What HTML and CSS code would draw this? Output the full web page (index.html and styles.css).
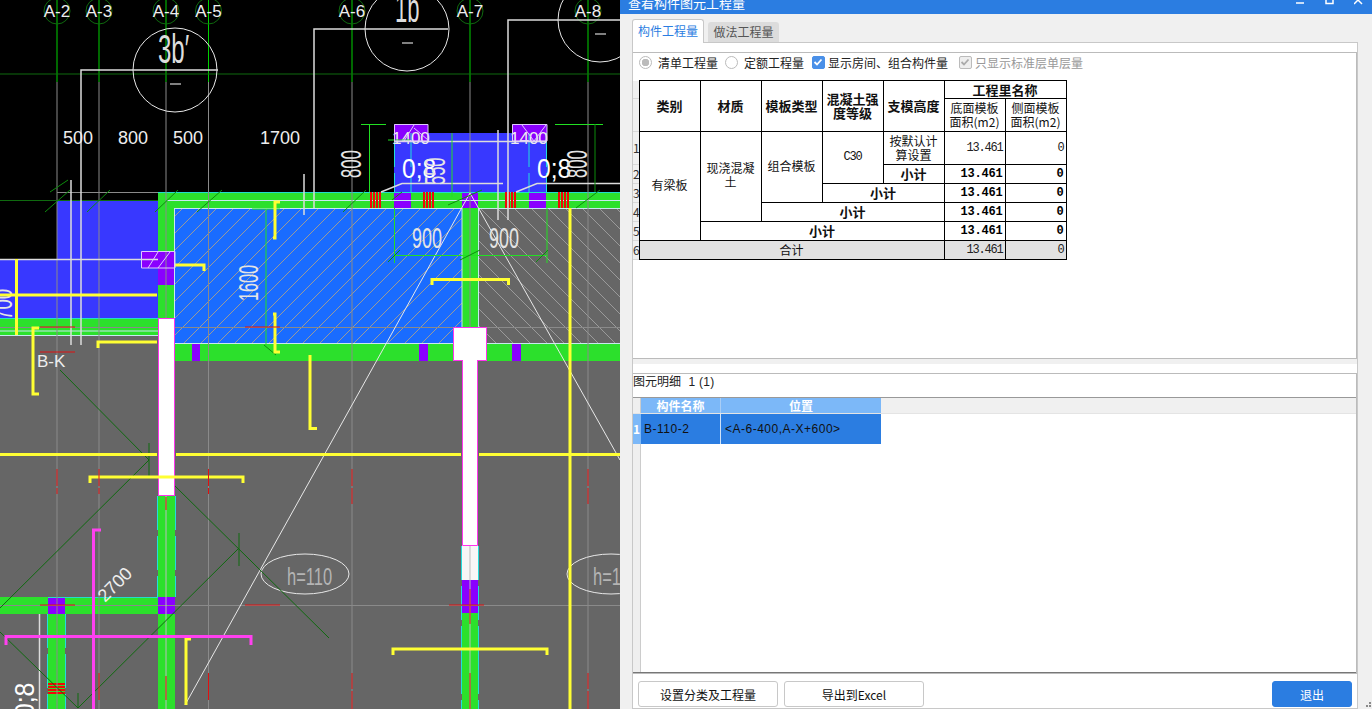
FILE: index.html
```html
<!DOCTYPE html>
<html lang="zh">
<head>
<meta charset="utf-8">
<title>查看构件图元工程量</title>
<link rel="stylesheet" href="styles.css">
</head>
<body>
<div class="app">
<svg class="cad" width="620" height="709" viewBox="0 0 620 709">
  <defs>
    <pattern id="hatchBlue" width="17" height="17" patternUnits="userSpaceOnUse">
      <path class="hatch" d="M-2 19L19 -2M-2 2L2 -2M15 19L19 15"/>
    </pattern>
    <pattern id="hatchGrey" width="17" height="17" patternUnits="userSpaceOnUse">
      <path class="hatch" d="M-2 -2L19 19M-2 15L2 19M15 -2L19 2"/>
    </pattern>
  </defs>
  <!-- ground -->
  <rect class="f-black" width="620" height="709"/>
  <rect class="f-grey" y="335" width="620" height="374"/>
  <rect class="f-blue" x="57" y="200" width="101" height="118"/>
  <rect class="f-blue" y="259" width="158" height="59"/>
  <rect class="f-blue" x="394" y="133" width="153" height="60"/>
  <rect class="f-sky" x="175" y="209" width="287" height="134"/>
  <rect fill="url(#hatchBlue)" x="175" y="209" width="287" height="134"/>
  <rect class="f-grey" x="478" y="209" width="142" height="134"/>
  <rect fill="url(#hatchGrey)" x="478" y="209" width="142" height="134"/>

  <!-- walls -->
  <rect class="f-green" x="158" y="192" width="462" height="16"/>
  <rect class="f-green" x="158" y="208" width="17" height="110"/>
  <rect class="f-green" y="318" width="158" height="17"/>
  <rect class="f-green" x="175" y="343" width="445" height="18"/>
  <rect class="f-green" x="462" y="208" width="16" height="119"/>
  <rect class="f-green" x="158" y="496" width="17" height="213"/>
  <rect class="f-green" y="597" width="158" height="17"/>
  <rect class="f-green" x="48" y="614" width="17" height="95"/>
  <rect class="f-green" x="462" y="613" width="16" height="96"/>
  <rect class="f-pale" x="462" y="546" width="16" height="34"/>

  <!-- purple blocks -->
  <rect class="f-purple" x="141" y="251" width="34" height="17"/>
  <rect class="f-purple" x="158" y="268" width="17" height="17"/>
  <rect class="f-purple" x="394" y="124" width="34" height="17"/>
  <rect class="f-purple" x="512" y="124" width="35" height="17"/>
  <rect class="f-purple" x="394" y="193" width="17" height="15"/>
  <rect class="f-purple" x="529" y="193" width="17" height="15"/>
  <rect class="f-purple" x="462" y="193" width="16" height="15"/>
  <rect class="f-purple" x="192" y="343" width="8" height="18"/>
  <rect class="f-purple" x="419" y="343" width="9" height="18"/>
  <rect class="f-purple" x="512" y="343" width="9" height="18"/>
  <rect class="f-purple" x="48" y="597" width="17" height="17"/>
  <rect class="f-purple" x="158" y="597" width="17" height="17"/>
  <rect class="f-purple" x="462" y="580" width="16" height="33"/>

  <!-- edges -->
  <path class="s-cyan" d="M158 192.500H620M0 318.500H158M158 597.500H48"/>
  <path class="s-edge" d="M175 208.500H462M478 208.500H620M175 343.500H453M487 343.500H620M174.500 208V318M462 208V327M478.500 208V327M167 200.500H620M0 335.500H158M0 331H158"/>
  <path class="s-cyan-dash" d="M157.500 496V597M175.500 496V597M47.500 614V709M65.500 614V709M461.500 546V660M478.500 546V660M461.500 660V709M478.500 660V709M394.500 133V192M546.500 133V192M411 133V192M529 133V192"/>

  <!-- red rebars -->
  <path class="s-red-bar" d="M371 192V208M374 192V208M377 192V208M380 192V208M424 192V208M427 192V208M430 192V208M433 192V208M506 192V208M509 192V208M512 192V208M515 192V208M559 192V208M562 192V208M565 192V208M568 192V208M48 684H65M48 687H65M48 690H65M48 693H65"/>

  <!-- thin grey grid -->
  <path class="s-grid" d="M57 82V709M99 82V709M166 82V318M208.500 82V709M352 82V709M470 82V327M588 82V709M0 327.500H620M0 605.500H620M57 192.500H158"/>
  <path class="s-gridlight" d="M166 496V709M470 546V709"/>

  <!-- white columns -->
  <rect class="s-magenta f-white" x="158.500" y="318.500" width="16" height="177"/>
  <rect class="f-white" x="462" y="361" width="16" height="185"/>
  <path class="s-magenta" d="M462.500 361V545.500H477.500V361"/>
  <rect class="s-magenta f-white" x="453.500" y="327.500" width="33" height="33"/>
  <rect class="f-white" x="463" y="359" width="14" height="4"/>

  <!-- axis -->
  <path class="s-axis" d="M57 0V82M99 0V82M166 0V82M208.500 0V82M352 0V82M470 0V82M588 0V82"/>
  <path class="s-dgreen" d="M0 74H620M0 200.500H158"/>
  <g class="s-dgreen">
    <circle cx="57" cy="11" r="13"/><circle cx="99" cy="11" r="13"/><circle cx="166" cy="11" r="13"/><circle cx="208.500" cy="11" r="13"/>
    <circle cx="352" cy="11" r="13"/><circle cx="470" cy="11" r="13"/><circle cx="588" cy="11" r="13"/>
  </g>
  <g class="axis-label">
    <text x="57" y="17">A-2</text><text x="99" y="17">A-3</text><text x="166" y="17">A-4</text><text x="208.500" y="17">A-5</text>
    <text x="352" y="17">A-6</text><text x="470" y="17">A-7</text><text x="588" y="17">A-8</text>
  </g>

  <!-- leaders & section circles -->
  <g class="s-white-thin">
    <circle cx="175" cy="70" r="42"/>
    <circle cx="407" cy="29" r="42"/>
    <circle cx="600" cy="20" r="42"/>
    <ellipse cx="305" cy="574" rx="44" ry="20"/>
    <ellipse cx="611" cy="574" rx="44" ry="20"/>
    <path d="M470 193L185 705M470 193L620 460"/>
  </g>
  <path class="s-white-2" d="M81 345V70H218M314 208V29H448M508 220V20H620M71 180V345M498 130V220M304 174V215M394 141.500H546"/>
  <path class="s-white-2" d="M381 192L402 183.500H503M516 192L537 183.500H620M0 259.500H158M39.500 614V709"/>
  <path class="s-dash-grey" d="M170 84H181M402 43H413M595 34H606"/>
  <text class="big-thin" transform="translate(158 63) scale(.6 1)">3b′</text>
  <text class="big-thin" transform="translate(395 22) scale(.55 1)">1b</text>

  <!-- dim text -->
  <g class="dim">
    <text x="63" y="144">500</text><text x="118" y="144">800</text><text x="173" y="144">500</text><text x="260" y="144">1700</text>
    <text x="392" y="144" class="small">1400</text><text x="510" y="144" class="small">1400</text>
    <text transform="translate(402 178) scale(.88 1)" class="large">0;8</text>
    <text transform="translate(537 178) scale(.88 1)" class="large">0;8</text>
    <text transform="translate(361 178) rotate(-90) scale(.76 1.300)" class="outline">800</text>
    <text transform="translate(587 178) rotate(-90) scale(.76 1.300)" class="outline">800</text>
    <text transform="translate(445 185) rotate(-90) scale(.75 1.300)" class="outline">550</text>
    <text transform="translate(412 248) scale(.72 1.150)" class="tall">900</text>
    <text transform="translate(489 248) scale(.72 1.150)" class="tall">900</text>
    <text transform="translate(258 301) rotate(-90) scale(.65 1.100)" class="tall">1600</text>
    <text transform="translate(105 603) rotate(-45)">2700</text>
    <text transform="translate(34 717) rotate(-90) scale(.88 1)" class="large">0;8</text>
    <text transform="translate(12 320) rotate(-90) scale(.75 1.100)" class="tall">700</text>
    <text x="37" y="367" class="bk">B-K</text>
  </g>
  <g class="h-label">
    <text transform="translate(287 585) scale(.75 1.100)">h=110</text>
    <text transform="translate(593 585) scale(.75 1.100)">h=110</text>
  </g>

  <!-- green dims -->
  <path class="s-dim" d="M369.500 124V192M361 124.500H386M452 133V197M394.500 208V263M547 208V263M394 255.500H547M266 209V345M252 209H280M388 140H410M16 259V318M555 124.500H603"/>
  <path class="s-dimdark" d="M595 124V192M50 192L68 180M392 200L402 192M448 205L482 190M45 212L70 190M87 212L110 190M155 212L178 190M197 212L222 190M343 212L366 190M576 208L600 190M264 345L276 355M388 262L400 250M460 260L480 250M536 262L548 250"/>

  <!-- structural diagonals -->
  <path class="s-dgreen" d="M60 370L149 460L0 608M149 443V476M175 486L329 638M239 533V566M239 548L78 708M0 632L78 708V693"/>

  <!-- yellow -->
  <g class="s-yellow">
    <path d="M273 238H275V202H280M280 352H275V314H273"/>
    <path d="M0 295H157M98 348V342H157M175 265H204V271M16.500 259V335M39 328H33V394H39"/>
    <path d="M0 454.500H157M176 454.500H461M479 454.500H620M90 483V477H243V483"/>
    <path d="M432 285V279.500H508.500V285M570 208V709M310 355V428.500H317M393 655V649H547V655"/>
    <path d="M191 639H186V705"/>
  </g>
  <path class="s-magenta-2" d="M101 530H93.500V709M6 645V636.500H251V645"/>

  <!-- red dashes -->
  <path class="s-red" d="M57 469V486M57 488V494M99 469V486M99 488V494M208.500 469V486M208.500 488V494M352 469V486M352 488V504M588 469V486M588 488V504M99 673V700M208.500 673V700M352 673V689M352 691V709M588 673V689M588 691V709M166 497V510M40 605H75M245 605H280M449 605H484M470 589V624M245 327H280M40 327H75M40 352H75M166 676V700M470 673V709"/>

  <!-- purple block hatch marks -->
  <path class="s-lilac" d="M141.500 251.500H175V268H141.500ZM148 268L158 252M158 268L170 252M394.500 124.500H428V141H394.500ZM404 141L414 125M414 128L428 140M512.500 124.500H547V141H512.500ZM522 125L534 141M534 141L546 125"/>
</svg>

<section class="dialog">
  <header class="titlebar">
    <span class="title">查看构件图元工程量</span>
    <span class="winbtns">
      <svg width="9" height="6" viewBox="0 0 9 6"><path class="win" d="M0 3H8"/></svg>
      <svg width="9" height="6" viewBox="0 0 9 6"><path class="win" d="M1 0V3.500H8V0"/></svg>
      <svg width="9" height="6" viewBox="0 0 9 6"><path class="win" d="M0 4L4 0L8 4"/></svg>
    </span>
  </header>

  <div class="tabs">
    <div class="tab active">构件工程量</div>
    <div class="tab">做法工程量</div>
  </div>

  <div class="tabpage">
    <div class="upper">
      <div class="options">
        <label class="opt"><i class="radio on"></i>清单工程量</label>
        <label class="opt"><i class="radio"></i>定额工程量</label>
        <label class="opt tight"><i class="check on"><svg width="12" height="12" viewBox="0 0 12 12"><path d="M2.500 6L5 8.500L9.500 3.500"/></svg></i>显示房间、组合构件量</label>
        <label class="opt tight off"><i class="check"><svg width="12" height="12" viewBox="0 0 12 12"><path d="M2.500 6L5 8.500L9.500 3.500"/></svg></i>只显示标准层单层量</label>
      </div>
      <table class="qty">
        <colgroup>
          <col class="c-idx"><col class="c-n"><col class="c-n"><col class="c-n"><col class="c-n"><col class="c-n"><col class="c-n"><col class="c-n">
        </colgroup>
        <tr class="r-a">
          <td class="idx"></td>
          <th rowspan="2">类别</th><th rowspan="2">材质</th><th rowspan="2">模板类型</th>
          <th rowspan="2">混凝土强<br>度等级</th><th rowspan="2">支模高度</th><th colspan="2">工程里名称</th>
        </tr>
        <tr class="r-b">
          <td class="idx"></td>
          <td class="sub">底面模板<br>面积(m2)</td><td class="sub">侧面模板<br>面积(m2)</td>
        </tr>
        <tr class="r-b">
          <td class="idx">1</td>
          <td rowspan="5" class="up-s">有梁板</td><td rowspan="4" class="up-m">现浇混凝<br>土</td><td rowspan="3" class="up-s">组合模板</td>
          <td rowspan="2" class="up-s mono">C30</td><td class="sub">按默认计<br>算设置</td>
          <td class="num">13.461</td><td class="num">0</td>
        </tr>
        <tr class="r-c">
          <td class="idx">2</td><th>小计</th><td class="num strong">13.461</td><td class="num strong">0</td>
        </tr>
        <tr class="r-c">
          <td class="idx">3</td><th colspan="2">小计</th><td class="num strong">13.461</td><td class="num strong">0</td>
        </tr>
        <tr class="r-c">
          <td class="idx">4</td><th colspan="3">小计</th><td class="num strong">13.461</td><td class="num strong">0</td>
        </tr>
        <tr class="r-c">
          <td class="idx">5</td><th colspan="4">小计</th><td class="num strong">13.461</td><td class="num strong">0</td>
        </tr>
        <tr class="r-c total">
          <td class="idx">6</td><td colspan="5">合计</td><td class="num">13.461</td><td class="num">0</td>
        </tr>
      </table>
    </div>

    <div class="splitter"></div>

    <div class="lower">
      <div class="lower-head">图元明细&nbsp;&nbsp;<span class="count">1 (1)</span></div>
      <div class="detail">
        <div class="detail-head">
          <span class="d-idx"></span><span class="d-a">构件名称</span><span class="d-b">位置</span>
        </div>
        <div class="detail-row">
          <span class="d-idx sel">1</span><span class="d-a">B-110-2</span><span class="d-b">&lt;A-6-400,A-X+600&gt;</span>
        </div>
        <div class="detail-fill"><span class="d-idx"></span></div>
      </div>
    </div>

    <div class="actions">
      <button class="btn">设置分类及工程量</button>
      <button class="btn">导出到Excel</button>
      <button class="btn primary">退出</button>
    </div>
  </div>
  <svg class="grip" width="8" height="8" viewBox="0 0 8 8"><path d="M5 1h2v2h-2zM2 4h2v2h-2zM5 4h2v2h-2z"/></svg>
</section>
</div>
</body>
</html>
```
FILE: styles.css
```css
* { box-sizing: border-box; }
html, body { margin: 0; padding: 0; height: 100%; overflow: hidden; }
body { font-family: "Noto Sans CJK SC", "Liberation Sans", sans-serif; font-size: 12px; color: #111; }
.app { display: flex; width: 1372px; height: 709px; }

/* CAD canvas */
.cad { display: block; flex: none; }
.cad path, .cad circle, .cad ellipse { fill: none; }
.f-black { fill: #000; }
.f-grey { fill: #666; }
.f-blue { fill: #3838ff; }
.f-sky { fill: #1a6cff; }
.f-green { fill: #2ce02c; }
.f-pale { fill: #f6f6f6; }
.f-purple { fill: #8a00ff; }
.cad .f-white { fill: #fff; }
.hatch { stroke: #9a9a9a; stroke-width: 1; }
.s-magenta { stroke: #ff33ee; stroke-width: 1; }
.s-magenta-2 { stroke: #ff40f0; stroke-width: 3; }
.s-cyan { stroke: #22ddcc; stroke-width: 1; }
.s-edge { stroke: #c8e8f0; stroke-width: 1; }
.s-cyan-dash { stroke: #22dddd; stroke-width: 1; stroke-dasharray: 34 6; }
.s-red-bar { stroke: #f00808; stroke-width: 2; }
.s-red { stroke: #e01010; stroke-width: 1; }
.s-grid { stroke: #8a8a8a; stroke-width: 1; }
.s-gridlight { stroke: #bbb; stroke-width: 1; }
.s-axis { stroke: #00d000; stroke-width: 1; }
.s-dgreen, .s-dgreen circle { stroke: #0f6a0f; stroke-width: 1; }
.s-white-thin circle, .s-white-thin ellipse, .s-white-thin path { stroke: #e8e8e8; stroke-width: 1; }
.s-white-2 { stroke: #dcdcdc; stroke-width: 1.500; }
.s-dash-grey { stroke: #aaa; stroke-width: 1.500; }
.s-dim { stroke: #22e022; stroke-width: 1; }
.s-dimdark { stroke: #0c8c0c; stroke-width: 1; }
.s-yellow path { stroke: #ffff33; stroke-width: 3; }
.s-lilac { stroke: #e0c8ff; stroke-width: 1; }
.axis-label text { fill: #eee; font: 17px "Liberation Sans", sans-serif; text-anchor: middle; }
.big-thin { fill: #ddd; font: 40px "Liberation Sans", sans-serif; }
.dim text { fill: #eee; font: 18px "Liberation Sans", sans-serif; }
.dim .small { font-size: 17px; }
.dim .large { font-size: 28px; fill: #fff; }
.dim .outline { font-size: 22px; fill: #e4e4e4; }
.dim .tall { font-size: 25px; fill: #e4e4e4; }
.dim .bk { font-size: 17px; }
.h-label text { fill: #b4b4b4; font: 22px "Liberation Sans", sans-serif; }

/* Dialog */
.dialog { flex: 1; min-width: 0; height: 709px; background: #f0f0f0; display: flex; flex-direction: column; position: relative; }
.titlebar { height: 14px; background: #2b7de1; color: #fff; display: flex; justify-content: space-between; overflow: hidden; padding: 0 7px 0 8px; flex: none; }
.title { font-size: 13px; line-height: 6px; }
.winbtns { display: flex; gap: 20px; align-items: flex-start; padding-right: 2px; }
.win { fill: none; stroke: #fff; stroke-width: 1.500; }
.grip { position: absolute; right: 0; bottom: 0; fill: #8a8a8a; }

.tabs { display: flex; gap: 4px; padding: 5px 0 0 12px; height: 28px; flex: none; align-items: flex-end; }
.tab { width: 71px; height: 20px; background: #dcdcdc; color: #555; text-align: center; line-height: 20px; border-radius: 3px 3px 0 0; }
.tab.active { width: 72px; height: 24px; line-height: 22px; background: #fff; color: #2b7de1; border: 1px solid #c8c8c8; border-bottom: 0; margin-bottom: -1px; position: relative; }

.tabpage { margin-left: 12px; width: 726px; flex: 1; min-height: 0; border: 1px solid #c8c8c8; border-bottom: 0; background: #fff; padding-top: 9px; display: flex; flex-direction: column; }
.upper { height: 307px; flex: none; border: 1px solid #bbb; border-width: 1px 1px 1px 0; background: #fff; }
.options { display: flex; height: 27px; align-items: center; padding: 0 0 9px 6px; }
.opt { display: flex; align-items: center; gap: 6px; margin-right: 7px; white-space: nowrap; color: #222; }
.opt.tight { gap: 3px; margin: 0 10px 0 1px; }
.opt.off { color: #999; }
.radio { width: 13px; height: 13px; border: 1px solid #bbb; border-radius: 50%; background: #fff; display: block; }
.radio.on { background: radial-gradient(circle, #bbb 0 3.500px, #fff 4px); }
.check { width: 13px; height: 13px; border: 1px solid #bbb; border-radius: 2px; background: #eee; display: block; }
.check.on { background: #4a90e8; border-color: #4a90e8; }
.check svg { display: block; margin: -1px 0 0 -1px; }
.check path { fill: none; stroke: #aaa; stroke-width: 1.800; }
.check.on path { stroke: #fff; }

.qty { border-collapse: collapse; table-layout: fixed; width: 433px; font-size: 12px; }
.c-idx { width: 6px; }
.c-n { width: 61px; }
.qty th, .qty td { border: 1px solid #000; padding: 0; text-align: center; line-height: 14px; overflow: hidden; font-weight: 400; }
.qty th { font-weight: 700; font-size: 13px; }
.qty .idx { border-width: 0 1px 0 0; background: #f0f0f0; text-align: left; font-size: 12px; color: #333; box-shadow: inset 0 -1px 0 #d8d8d8; }
.qty .num { text-align: right; padding-right: 2px; font-family: "Liberation Mono", monospace; font-size: 12px; letter-spacing: -1.200px; color: #222; }
.qty .strong { font-weight: 700; letter-spacing: -.2px; color: #000; }
.qty .sub { line-height: 14px; }
.qty .up-m { padding-bottom: 4px; }
.qty .up-s { padding-bottom: 2px; }
.qty .mono { font-family: "Liberation Mono", monospace; font-size: 12px; letter-spacing: -1.200px; }
.r-a { height: 18px; }
.r-b { height: 33px; }
.r-c { height: 19px; }
.total td { background: #e2e2e2; }
.total .idx { background: #f0f0f0; }

.splitter { height: 14px; flex: none; background: linear-gradient(#f0f0f0 0 5px, #fff 5px); }
.lower { flex: 1; min-height: 0; border: 1px solid #bbb; border-width: 1px 1px 1px 0; display: flex; flex-direction: column; background: #fff; }
.lower-head { height: 23px; line-height: 14px; flex: none; color: #222; }
.count { font-family: "Liberation Sans", sans-serif; font-size: 12px; letter-spacing: .3px; margin-left: 2px; }
.detail { flex: 1; display: flex; flex-direction: column; border-top: 1px solid #999; border-bottom: 1px solid #777; min-height: 0; }
.detail-head, .detail-row, .detail-fill { display: flex; flex: none; }
.detail-head { height: 16px; background: #f0f0f0; border-bottom: 1px solid #e4e4e4; }
.detail-row { height: 30px; }
.detail-fill { flex: 1; }
.d-idx { width: 8px; flex: none; background: #efefef; border-right: 1px solid #ccc; }
.d-idx.sel { background: #7cb8f8; color: #fff; font-weight: 700; line-height: 30px; font-size: 12px; overflow: hidden; border-right: 0; }
.d-a { width: 80px; flex: none; border-right: 1px solid #a9cdf5; }
.d-b { width: 160px; flex: none; }
.detail-head .d-a, .detail-head .d-b { background: #7cb8f8; color: #fff; font-weight: 700; text-align: center; line-height: 15px; }
.detail-row .d-a, .detail-row .d-b { background: #2b7de1; color: #111; line-height: 31px; padding-left: 3px; font-family: "Liberation Sans", sans-serif; font-size: 12px; letter-spacing: .5px; }
.detail-row .d-a { border-right: 1px solid #cfe2f8; }
.detail-row .d-b { padding-left: 4px; }

.actions { display: flex; height: 35px; flex: none; padding: 7px 5px 1px 5px; gap: 6px; border-bottom: 1px solid #c8c8c8; }
.btn { width: 140px; height: 26px; background: #fff; border: 1px solid #c8c8c8; border-radius: 3px; font: inherit; color: #111; padding: 0; }
.btn.primary { width: 80px; margin-left: auto; background: #2b7de1; border-color: #2b7de1; color: #fff; }
```
